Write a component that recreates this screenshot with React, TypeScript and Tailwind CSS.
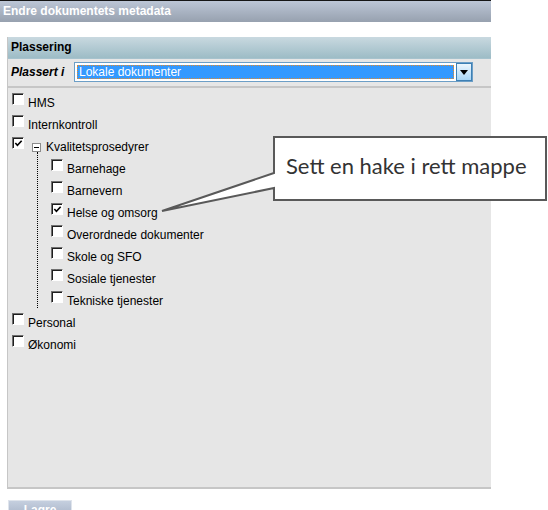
import React from "react";

type Item = { label: string; checked?: boolean };

const topItems: Item[] = [{ label: "HMS" }, { label: "Internkontroll" }];

const children: Item[] = [
  { label: "Barnehage" },
  { label: "Barnevern" },
  { label: "Helse og omsorg", checked: true },
  { label: "Overordnede dokumenter" },
  { label: "Skole og SFO" },
  { label: "Sosiale tjenester" },
  { label: "Tekniske tjenester" },
];

const bottomItems: Item[] = [{ label: "Personal" }, { label: "Økonomi" }];

function Box({ checked }: { checked?: boolean }) {
  return (
    <span className="relative block h-[12px] w-[12px] shrink-0 border border-b-white border-l-[#6f6f6f] border-r-white border-t-[#6f6f6f] bg-white shadow-[inset_1px_1px_0_#1e1e1e]">
      {checked && (
        <svg viewBox="0 0 10 10" className="absolute left-[1px] top-[1px] h-[9px] w-[9px]">
          <path d="M1.5 4.5 L3.8 7 L8.5 2" fill="none" stroke="#000" strokeWidth="1.8" />
        </svg>
      )}
    </span>
  );
}

function Row({ item }: { item: Item }) {
  return (
    <div className="flex h-[22px] items-start gap-[4px]">
      <Box checked={item.checked} />
      <span className="leading-[20px]">{item.label}</span>
    </div>
  );
}

export default function App() {
  return (
    <div className="relative h-[510px] w-[548px] overflow-hidden bg-white font-['Liberation_Sans',Arial,sans-serif] text-[12px] text-black">
      <div className="h-[22px] w-[491px] border-t border-[#151515] bg-gradient-to-b from-[#bcc6d6] to-[#97a1af] pl-[3px] text-[12px] font-bold leading-[21px] text-white">
        Endre dokumentets metadata
      </div>

      <div className="ml-[7px] mt-[15px] flex h-[452px] w-[484px] flex-col border-b-2 border-l border-[#c6c6c6] bg-[#e6e6e6]">
        <div className="h-[22px] border-b border-[#a6c2cd] bg-gradient-to-b from-[#c9d9e0] to-[#9dbcc6] pl-[3px] font-bold leading-[21px]">
          Plassering
        </div>

        <div className="flex h-[27px] items-start pl-[3px] pt-[3px]">
          <span className="w-[63px] font-bold italic leading-[20px]">Plassert i</span>
          <div className="flex h-[20px] w-[399px] border border-[#6c9ec6] bg-white">
            <div className="m-[2px] flex-1 border border-dotted border-[#e08a2e] bg-[#3399ff] pl-[1px] leading-[13px] text-white">
              Lokale dokumenter
            </div>
            <div className="flex w-[16px] items-center justify-center border border-[#3e80b4] bg-gradient-to-b from-[#eef7fd] to-[#a9d5f5]">
              <svg viewBox="0 0 8 5" className="h-[5px] w-[8px]">
                <path d="M0 0 H8 L4 5 Z" fill="#000" />
              </svg>
            </div>
          </div>
        </div>

        <div className="h-[2px] bg-[#c6c6c6]" />

        <div className="pl-[4px] pt-[5px]">
          {topItems.map((it) => (
            <Row key={it.label} item={it} />
          ))}

          <div className="flex h-[22px] items-start">
            <Box checked />
            <span className="ml-[8px] mt-[6px] flex h-[9px] w-[9px] items-center justify-center border border-[#8c8c8c] bg-white">
              <span className="block h-px w-[5px] bg-black" />
            </span>
            <span className="ml-[5px] leading-[20px]">Kvalitetsprosedyrer</span>
          </div>

          <div className="relative pl-[39px]">
            <div className="absolute left-[25px] top-[-7px] h-[156px] border-l border-dotted border-black" />
            {children.map((it) => (
              <Row key={it.label} item={it} />
            ))}
          </div>

          {bottomItems.map((it) => (
            <Row key={it.label} item={it} />
          ))}
        </div>
      </div>

      <div className="ml-[8px] mt-[11px] h-[20px] w-[64px] border border-[#dfe4ec] bg-gradient-to-b from-[#c5cfdf] to-[#a3afc3] text-center font-bold leading-[18px] text-white">
        Lagre
      </div>

      <svg className="absolute left-0 top-0" width="548" height="510" viewBox="0 0 548 510">
        <polygon
          points="274,137 546,137 546,200 274,200 274,188 162,211 274,173"
          fill="#fff"
          stroke="#595959"
          strokeWidth="2"
          strokeLinejoin="miter"
        />
      </svg>
      <div className="absolute left-[286px] top-[152px] font-['Lato',sans-serif] text-[22px] leading-[28px] text-[#333]">
        Sett en hake i rett mappe
      </div>
    </div>
  );
}
